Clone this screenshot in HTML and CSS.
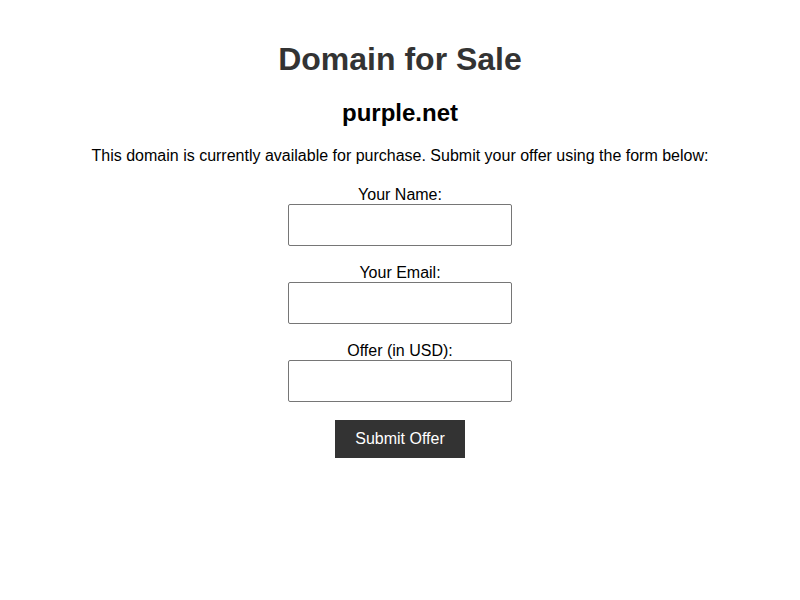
FILE: index.html
```
<!DOCTYPE html>
<html>
<head>
<meta charset="utf-8">
<title>Domain for Sale</title>
<link rel="stylesheet" href="styles.css">
</head>
<body>
<main class="page">
  <h1 class="title">Domain for Sale</h1>
  <h2 class="domain">purple.net</h2>
  <p class="intro">This domain is currently available for purchase. Submit your offer using the form below:</p>
  <form class="offer-form">
    <div class="field">
      <label for="name">Your Name:</label>
      <input id="name" type="text">
    </div>
    <div class="field">
      <label for="email">Your Email:</label>
      <input id="email" type="email">
    </div>
    <div class="field">
      <label for="offer">Offer (in USD):</label>
      <input id="offer" type="text">
    </div>
    <button type="button" class="submit">Submit Offer</button>
  </form>
</main>
</body>
</html>
```
FILE: styles.css
```
html, body {
  margin: 0;
  padding: 0;
  background: #fff;
}
body {
  font-family: "Liberation Sans", Arial, sans-serif;
  color: #000;
}
.page {
  display: flex;
  flex-direction: column;
  align-items: center;
  text-align: center;
  padding-top: 41px;
}
.title {
  margin: 0;
  font-size: 32px;
  line-height: 37px;
  font-weight: bold;
  color: #333;
}
.domain {
  margin: 21px 0 0;
  font-size: 24px;
  line-height: 28px;
  font-weight: bold;
}
.intro {
  margin: 20px 0 0;
  font-size: 16px;
  line-height: 18px;
}
.offer-form {
  margin-top: 20px;
  display: flex;
  flex-direction: column;
  align-items: center;
}
.field {
  display: flex;
  flex-direction: column;
  align-items: center;
  margin-bottom: 17px;
}
.field label {
  font-size: 16px;
  line-height: 18px;
  padding-top: 1px;
}
.field input {
  box-sizing: border-box;
  width: 224px;
  height: 42px;
  padding: 10px;
  font-size: 16px;
  font-family: inherit;
  border: 1px solid #767676;
  border-radius: 2px;
  background: #fff;
}
.submit {
  margin-top: 1px;
  background: #333;
  color: #fff;
  border: none;
  padding: 10px 20px;
  font-size: 16px;
  line-height: 18px;
  font-family: inherit;
  width: 130px;
  height: 38px;
}
```
